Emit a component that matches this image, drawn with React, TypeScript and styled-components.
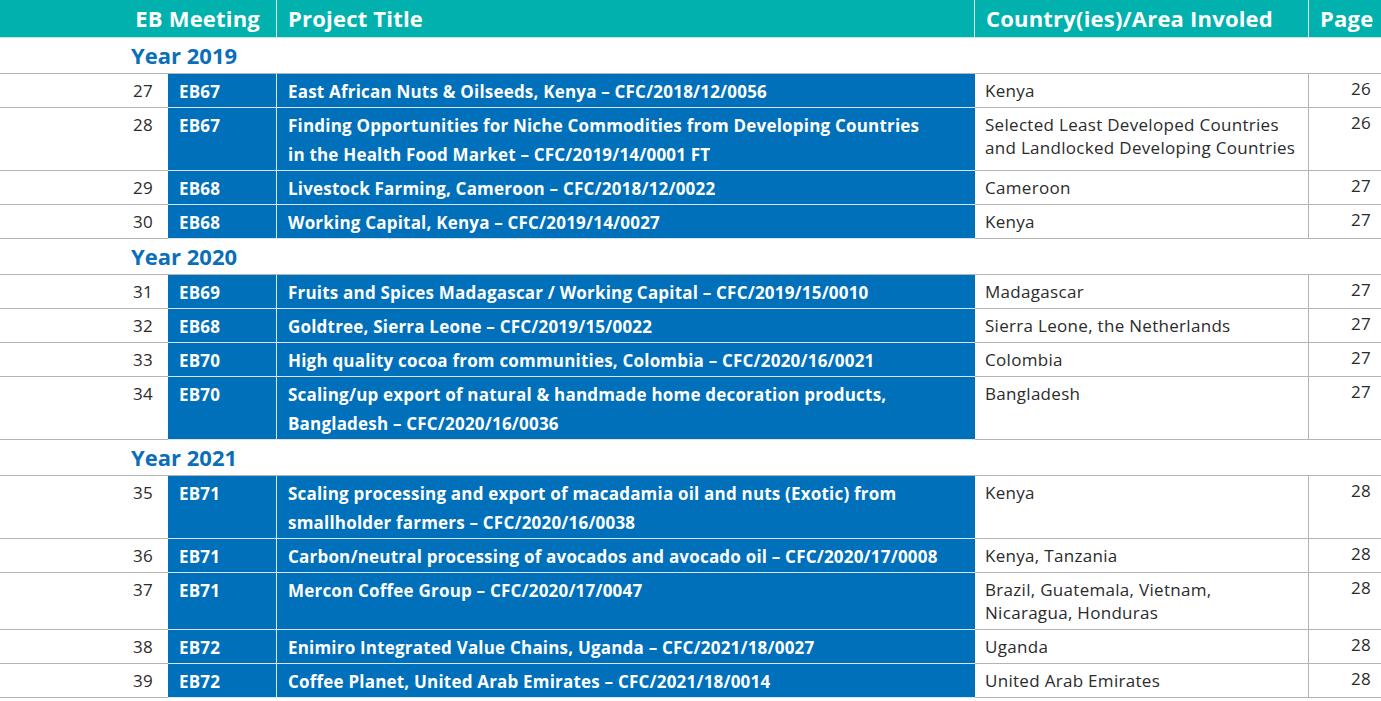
import React from "react";
import styled, { createGlobalStyle } from "styled-components";

const GlobalStyle = createGlobalStyle`
  html, body { margin: 0; padding: 0; background: #ffffff; }
  body { font-family: "Open Sans", "Liberation Sans", sans-serif; }
`;

const COLS = "168px 109px 698px 334px 72px";
const TEAL = "#00b1ad";
const BLUE = "#0070ba";
const GRID = "#b3b3b3";
const BLUE_LINE = "#d6e6f3";

const Table = styled.div`
  width: 1381px;
  display: flex;
  flex-direction: column;
`;

const HeaderRow = styled.div`
  display: grid;
  grid-template-columns: ${COLS};
  height: 38px;
  background: ${TEAL};
  border-bottom: 1px solid #bfe9e7;
  box-sizing: border-box;
`;

const HeaderCell = styled.div<{ $span?: number; $right?: boolean; $last?: boolean }>`
  grid-column: span ${(p) => p.$span ?? 1};
  display: flex;
  align-items: center;
  justify-content: ${(p) => (p.$right ? "flex-end" : "flex-start")};
  padding: ${(p) => (p.$right ? "0 16px 1px 0" : "0 0 1px 11px")};
  color: #ffffff;
  font-weight: 700;
  font-size: 22px;
  letter-spacing: 0.2px;
  border-right: ${(p) => (p.$last ? "none" : "1px solid #d8f1f0")};
  white-space: nowrap;
  overflow: hidden;
`;

const YearRow = styled.div`
  height: 36px;
  display: flex;
  align-items: center;
  padding: 0 0 2px 131px;
  box-sizing: border-box;
  color: #0a6fb8;
  font-weight: 700;
  font-size: 22px;
  border-bottom: 1px solid ${GRID};
`;

const DataRow = styled.div`
  display: grid;
  grid-template-columns: ${COLS};
  border-bottom: 1px solid ${GRID};
`;

const NumCell = styled.div`
  padding: 5px 15px 5px 0;
  text-align: right;
  font-size: 17px;
  line-height: 23px;
  letter-spacing: 0.3px;
  color: #2b2b2b;
`;

const BlueCell = styled.div<{ $divider?: boolean }>`
  background: ${BLUE};
  color: #ffffff;
  font-weight: 700;
  font-size: 17px;
  letter-spacing: 0.2px;
  line-height: 29px;
  padding: 3px 11px 1px 11px;
  border-right: ${(p) => (p.$divider ? `1px solid ${BLUE_LINE}` : "none")};
  box-shadow: 0 1px 0 ${BLUE_LINE};
  white-space: pre-line;
`;

const CountryCell = styled.div`
  padding: 5px 10px 5px 10px;
  font-size: 17px;
  letter-spacing: 0.3px;
  line-height: 23px;
  color: #2b2b2b;
  border-right: 1px solid ${GRID};
  white-space: pre-line;
`;

const PageCell = styled.div`
  padding: 3px 10px 5px 0;
  text-align: right;
  font-size: 17px;
  letter-spacing: 0.3px;
  line-height: 23px;
  color: #2b2b2b;
`;

type Row = { n: number; eb: string; title: string; country: string; page: number };
type Group = { year: string; rows: Row[] };

const data: Group[] = [
  {
    year: "Year 2019",
    rows: [
      { n: 27, eb: "EB67", title: "East African Nuts & Oilseeds, Kenya – CFC/2018/12/0056", country: "Kenya", page: 26 },
      {
        n: 28,
        eb: "EB67",
        title: "Finding Opportunities for Niche Commodities from Developing Countries\nin the Health Food Market – CFC/2019/14/0001 FT",
        country: "Selected Least Developed Countries\nand Landlocked Developing Countries",
        page: 26,
      },
      { n: 29, eb: "EB68", title: "Livestock Farming, Cameroon – CFC/2018/12/0022", country: "Cameroon", page: 27 },
      { n: 30, eb: "EB68", title: "Working Capital, Kenya – CFC/2019/14/0027", country: "Kenya", page: 27 },
    ],
  },
  {
    year: "Year 2020",
    rows: [
      { n: 31, eb: "EB69", title: "Fruits and Spices Madagascar / Working Capital – CFC/2019/15/0010", country: "Madagascar", page: 27 },
      { n: 32, eb: "EB68", title: "Goldtree, Sierra Leone – CFC/2019/15/0022", country: "Sierra Leone, the Netherlands", page: 27 },
      { n: 33, eb: "EB70", title: "High quality cocoa from communities, Colombia – CFC/2020/16/0021", country: "Colombia", page: 27 },
      {
        n: 34,
        eb: "EB70",
        title: "Scaling/up export of natural & handmade home decoration products,\nBangladesh – CFC/2020/16/0036",
        country: "Bangladesh",
        page: 27,
      },
    ],
  },
  {
    year: "Year 2021",
    rows: [
      {
        n: 35,
        eb: "EB71",
        title: "Scaling processing and export of macadamia oil and nuts (Exotic) from\nsmallholder farmers – CFC/2020/16/0038",
        country: "Kenya",
        page: 28,
      },
      { n: 36, eb: "EB71", title: "Carbon/neutral processing of avocados and avocado oil – CFC/2020/17/0008", country: "Kenya, Tanzania", page: 28 },
      { n: 37, eb: "EB71", title: "Mercon Coffee Group – CFC/2020/17/0047", country: "Brazil, Guatemala, Vietnam,\nNicaragua, Honduras", page: 28 },
      { n: 38, eb: "EB72", title: "Enimiro Integrated Value Chains, Uganda – CFC/2021/18/0027", country: "Uganda", page: 28 },
      { n: 39, eb: "EB72", title: "Coffee Planet, United Arab Emirates – CFC/2021/18/0014", country: "United Arab Emirates", page: 28 },
    ],
  },
];

export default function App() {
  return (
    <>
      <GlobalStyle />
      <Table>
        <HeaderRow>
          <HeaderCell $span={2} $right>
            EB Meeting
          </HeaderCell>
          <HeaderCell>Project Title</HeaderCell>
          <HeaderCell>Country(ies)/Area Involed</HeaderCell>
          <HeaderCell $last>Page</HeaderCell>
        </HeaderRow>
        {data.map((g) => (
          <React.Fragment key={g.year}>
            <YearRow>{g.year}</YearRow>
            {g.rows.map((r) => (
              <DataRow key={r.n}>
                <NumCell>{r.n}</NumCell>
                <BlueCell $divider>{r.eb}</BlueCell>
                <BlueCell>{r.title}</BlueCell>
                <CountryCell>{r.country}</CountryCell>
                <PageCell>{r.page}</PageCell>
              </DataRow>
            ))}
          </React.Fragment>
        ))}
      </Table>
    </>
  );
}
